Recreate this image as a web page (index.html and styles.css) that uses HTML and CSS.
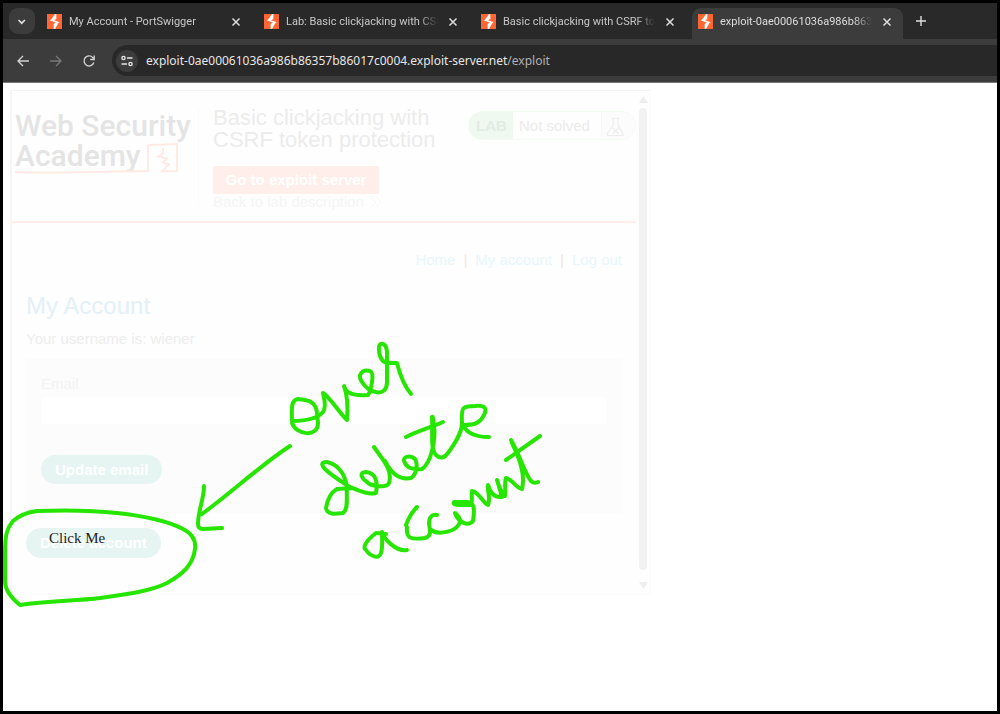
FILE: index.html
```
<!DOCTYPE html>
<html lang="en">
<head>
<meta charset="utf-8">
<title>Exploit preview</title>
<link rel="stylesheet" href="styles.css">
</head>
<body>
<svg class="defs" aria-hidden="true">
  <symbol id="bolt" viewBox="0 0 15 15"><rect width="15" height="15" fill="#ff6633"/><path d="M8.500 0v4.500L4.800 6.200l6 2.200L7.500 10.500V15M8.500 1 4.600 6.200M10.800 8.400 7.500 14" fill="none" stroke="#fff" stroke-width="1.700"/></symbol>
  <symbol id="close" viewBox="0 0 16 16"><path d="m4.5 4.5 7 7m0-7-7 7" fill="none" stroke="currentColor" stroke-width="1.5"/></symbol>
</svg>
<div class="browser">
  <header class="tabs">
    <button class="tab-search" aria-label="Search tabs"><svg viewBox="0 0 25 25"><path d="m9.5 11 3.2 3.2 3.2-3.2" fill="none" stroke="currentColor" stroke-width="1.7"/></svg></button>
    <div class="tab"><svg class="favicon"><use href="#bolt"/></svg><span class="tab-title">My Account - PortSwigger</span><button class="close" aria-label="Close tab"><svg><use href="#close"/></svg></button></div>
    <div class="tab"><svg class="favicon"><use href="#bolt"/></svg><span class="tab-title">Lab: Basic clickjacking with CSRF</span><button class="close" aria-label="Close tab"><svg><use href="#close"/></svg></button></div>
    <div class="tab"><svg class="favicon"><use href="#bolt"/></svg><span class="tab-title">Basic clickjacking with CSRF toke</span><button class="close" aria-label="Close tab"><svg><use href="#close"/></svg></button></div>
    <div class="tab active"><svg class="favicon"><use href="#bolt"/></svg><span class="tab-title">exploit-0ae00061036a986b86357</span><button class="close" aria-label="Close tab"><svg><use href="#close"/></svg></button></div>
    <button class="new-tab" aria-label="New tab"><svg viewBox="0 0 16 16"><path d="M8 3v10M3 8h10" fill="none" stroke="currentColor" stroke-width="1.4"/></svg></button>
  </header>
  <div class="toolbar">
    <button class="tool" aria-label="Back"><svg viewBox="0 0 16 16"><path d="M14 8H3m5-5L3 8l5 5" fill="none" stroke="currentColor" stroke-width="1.4"/></svg></button>
    <button class="tool dim" aria-label="Forward"><svg viewBox="0 0 16 16"><path d="M2 8h11M8 3l5 5-5 5" fill="none" stroke="currentColor" stroke-width="1.4"/></svg></button>
    <button class="tool" aria-label="Reload"><svg viewBox="0 0 16 16"><path d="M12.8 9.5A5 5 0 1 1 11.8 4.6L13 6M13.2 2.5v4H9.2" fill="none" stroke="currentColor" stroke-width="1.4"/></svg></button>
    <div class="address">
      <button class="site-info" aria-label="Site information"><svg viewBox="0 0 14 14"><g fill="none" stroke="currentColor" stroke-width="1.4"><circle cx="3.5" cy="4" r="1.6"/><path d="M7 4h5.500M1.500 10H7"/><circle cx="10.5" cy="10" r="1.6"/></g></svg></button>
      <span class="url">exploit-0ae00061036a986b86357b86017c0004.exploit-server.net<span class="path">/exploit</span></span>
    </div>
  </div>
  <main class="page">
    <section class="frame">
      <div class="lab">
        <header class="lab-header">
          <div class="logo">
            <span>Web Security</span>
            <span>Academy</span>
            <svg class="logo-mark" viewBox="0 0 164 34"><path d="M0 31C40 33 90 30 133 30V4l29-1v27l-15 .5 7-7-6-2 4-4-9-2 5-3V7" fill="none" stroke="#ffe9e2" stroke-width="1.800"/></svg>
          </div>
          <div class="lab-info">
            <h2>Basic clickjacking with CSRF token protection</h2>
            <a class="exploit" href="#">Go to exploit server</a>
            <a class="back" href="#">Back to lab description <svg viewBox="0 0 12 12"><path d="m1 1 5 5-5 5m5-10 5 5-5 5" fill="none" stroke="currentColor"/></svg></a>
          </div>
          <div class="status">
            <b>LAB</b><span>Not solved</span>
            <svg viewBox="0 0 34 28"><path d="M10 6h8M11.500 6v7L5.500 22q-.5 2 1 2h14q1.500 0 1-2L16.500 13V6M11 16l6 6m0-6-6 6" fill="none" stroke="#ededed" stroke-width="1.200"/></svg>
          </div>
        </header>
        <div class="content">
          <nav><a href="#">Home</a><i>|</i><a href="#">My account</a><i>|</i><a href="#">Log out</a></nav>
          <h1>My Account</h1>
          <p>Your username is: wiener</p>
          <form class="email-form">
            <label for="email">Email</label>
            <input id="email" type="email">
            <button type="button" class="pill">Update email</button>
          </form>
          <button type="button" class="pill delete">Delete account</button>
        </div>
      </div>
      <div class="scrollbar">
        <svg viewBox="0 0 9 7"><path d="M4.500 0 9 7H0z" fill="#eee"/></svg>
        <div class="thumb"></div>
        <svg viewBox="0 0 9 7"><path d="M0 0h9L4.500 7z" fill="#eee"/></svg>
      </div>
    </section>
    <div class="decoy">Click Me</div>
  </main>
</div>
<svg class="ink" width="560" height="620" viewBox="0 0 560 620" aria-label="over delete account">
  <path d="M20 605 C10 597 5 590 5 581 L5 553 C5 535 7 528 13 521 C20 515 29 512 37 511 C63 510 90 510 117 513 C144 516 166 520 183 529 C193 534 196 541 195 549 C193 565 183 574 167 583 C151 591 128 594 100 598 C75 601 48 601 20 605"/>
  <path d="M290 446 C262 464 232 492 202 514"/>
  <path d="M204 486 C204 499 198 511 198 524 Q198 529 203 529 L222 528"/>
  <path d="M292 423 C296 435 318 438 318 423 L317 413 C316 400 306 400 298 399 C290 400 292 412 292 421 C305 421 317 419 323 412 C327 406 324 398 323 393 C330 397 340 414 347 420 C348 408 347 394 344 386 C346 394 356 396 368 395 C371 391 375 373 370 371 C362 369 357 375 362 382 C369 393 386 398 387 383 L387 352 C386 341 378 342 379 349 C379 358 383 363 388 363 L397 363 C400 375 405 387 411 394"/>
  <path d="M352 488 L337 489 C330 493 327 502 326 508 C327 515 335 514 343 513 C349 509 346 496 347 487 C345 473 337 464 327 462 C321 462 321 465 325 469 C332 476 342 482 350 487 C360 491 369 495 376 493 C378 482 376 473 366 472 C359 472 361 478 367 482 C372 487 387 488 389 483 C393 470 383 460 374 447"/>
  <path d="M385 461 C392 475 400 480 411 478 C417 474 418 464 415 459 C411 455 403 456 404 461 C406 468 413 470 422 469 C431 463 436 440 434 425 Q433 415 432 417 C433 433 430 448 436 455 Q442 461 448 453 C456 442 463 431 462 421 C461 407 463 406 475 406 C486 405 487 409 484 415 C479 425 472 425 463 425 C467 434 477 437 489 437"/>
  <path d="M406 437 C418 431 432 427 443 422"/>
  <path d="M386 534 L376 533 C367 540 362 547 366 550 C370 556 379 560 381 553 C383 547 382 538 382 532 C384 539 396 552 407 550"/>
  <path d="M417 507 Q410 514 406 525 M407 527 C406 538 410 540 425 538 C432 536 430 530 429 524 C429 518 431 514 437 515 M430 529 C437 536 457 532 460 522 Q461 518 455 513 C458 522 468 527 473 521 C475 508 474 502 467 502 H454 Q452 505 460 505 H471 C473 500 471 496 472 491 C479 492 483 503 488 505 C491 498 487 491 488 485 C490 492 494 498 502 497 C500 490 499 486 497 480 C499 487 502 493 505 496 C506 490 504 483 506 478 C512 479 517 489 522 489 C525 477 522 464 511 440 C519 453 525 474 531 481 Q534 484 538 482"/>
  <path d="M506 460 L540 436 M512 443 L522 464"/>
</svg>
</body>
</html>
```
FILE: styles.css
```
* { box-sizing: border-box; }
body { margin: 0; background: #000; font-family: "Liberation Sans", Arial, sans-serif; }
button { border: 0; padding: 0; background: none; font: inherit; color: inherit; }
a { text-decoration: none; }
.defs { position: absolute; width: 0; height: 0; }

.browser { display: flex; flex-direction: column; min-height: 100vh; border: 3px solid #000; background: #3c3c3c; }

.tabs { display: flex; align-items: flex-end; gap: 6px; height: 36px; padding-left: 6px; background: #292929; color: #c7c7c7; font: 11px/16px Roboto, sans-serif; }
.tab-search { width: 26px; height: 26px; margin-bottom: 5px; border-radius: 9px; background: #3c3c3c; color: #ddd; }
.tab-search svg { display: block; width: 25px; height: 25px; }
.tab { display: flex; align-items: center; gap: 7px; flex: 0 1 211px; min-width: 0; height: 31px; padding: 0 8px 4px 6px; }
.tab.active { border-radius: 9px 9px 0 0; background: #3c3c3c; color: #ddd; }
.favicon { flex: none; width: 15px; height: 15px; }
.tab-title { flex: 1; min-width: 0; overflow: hidden; white-space: nowrap; -webkit-mask-image: linear-gradient(to right, #000 88%, transparent); mask-image: linear-gradient(to right, #000 88%, transparent); }
.close, .close svg { display: block; width: 16px; height: 16px; color: #ddd; }
.new-tab { width: 16px; height: 16px; margin: 0 4px 10px; color: #ddd; }
.new-tab svg { display: block; }

.toolbar { display: flex; align-items: center; gap: 17px; height: 44px; padding-left: 12px; border-bottom: 1px solid #777; border-top-left-radius: 9px; color: #d0d0d0; }
.tool { width: 16px; height: 16px; }
.tool svg { display: block; }
.dim { color: #777; }
.address { display: flex; align-items: center; flex: 1; gap: 8px; height: 31px; margin-left: -2px; padding-left: 4px; border-radius: 16px 0 0 16px; background: #282828; font: 12px/18px "Noto Sans", sans-serif; color: #e6e6e6; }
.site-info { display: grid; place-items: center; width: 22px; height: 22px; border-radius: 11px; background: #3c3c3c; }
.site-info svg { width: 14px; height: 14px; }
.path { color: #b0b0b0; }

.page { position: relative; flex: 1; padding: 7px; background: #fff; }
.frame { display: flex; width: 100%; max-width: 641px; min-height: 505px; border: 1px solid #fbfbfb; border-top-color: #f4f4f4; border-left: 2px solid #f6f6f6; background: #fefefe; }
.lab { flex: 1; font-size: 15px; line-height: 18px; color: #ededed; }
.lab-header { display: flex; align-items: flex-start; min-height: 132px; padding: 16px 0 12px 3px; border-bottom: 2px solid #ffeee9; }
.logo { position: relative; width: 184px; height: 99px; padding-top: 4px; border-right: 1px solid #fafafa; font: 500 30px/30px Roboto, sans-serif; color: #e4e4e4; white-space: nowrap; }
.logo span { display: block; }
.logo-mark { position: absolute; left: 0; top: 34px; width: 164px; height: 34px; }
.lab-info { flex: 1; padding-left: 14px; }
.lab-info h2 { max-width: 240px; margin: 0 0 15px; font-size: 22px; line-height: 22px; font-weight: 400; color: #ececec; }
.exploit { display: block; width: 166px; height: 28px; background: #ffeee9; color: #fff; font-weight: 700; line-height: 28px; text-align: center; }
.back { display: flex; align-items: center; gap: 6px; line-height: 15px; color: #f5f5f5; }
.back svg { width: 12px; height: 12px; }
.status { display: flex; overflow: hidden; width: 168px; height: 29px; margin-top: 4px; border: 1px solid #f2faf2; border-radius: 15px; line-height: 28px; color: #ebebeb; }
.status b { width: 44px; padding-left: 7px; background: #eff9ef; color: #e4eae4; }
.status span { flex: 1; padding-left: 6px; white-space: nowrap; }
.status svg { width: 34px; height: 28px; border-left: 1px solid #f2faf2; background: #fcfcfc; }
.content { padding: 28px 14px 36px; }
nav { display: flex; justify-content: flex-end; gap: 8px; }
nav a { color: #e8f6fd; }
nav i { font-style: normal; color: #eee6e4; }
h1 { margin: 23px 0 10px; font-size: 24px; line-height: 28px; font-weight: 400; color: #e2f0f9; }
p { margin: 0 0 11px; }
.email-form { display: flex; flex-direction: column; align-items: flex-start; height: 154px; margin-bottom: 15px; padding: 16px 15px; background: #fcfcfc; color: #f3f3f3; }
.email-form input { width: 100%; height: 28px; margin: 4px 0 30px; border: 1px solid #fdfdfd; background: #fff; }
.pill { height: 29px; padding: 0 14px; border-radius: 15px; background: #e6f5f1; color: #fff; font-weight: 700; }
.delete { height: 30px; }
.scrollbar { display: flex; flex-direction: column; align-items: center; width: 14px; padding: 5px 0; }
.scrollbar svg { width: 9px; height: 7px; }
.thumb { flex: 1; width: 8px; margin: 5px 0 12px; border-radius: 4px; background: #f2f2f2; }
.decoy { position: absolute; left: 46px; top: 447px; font: 15px/17px "Liberation Serif", "Times New Roman", serif; color: #222; }

.ink { position: absolute; left: 0; top: 0; pointer-events: none; fill: none; stroke: #26e600; stroke-width: 4; stroke-linecap: round; stroke-linejoin: round; }
```
